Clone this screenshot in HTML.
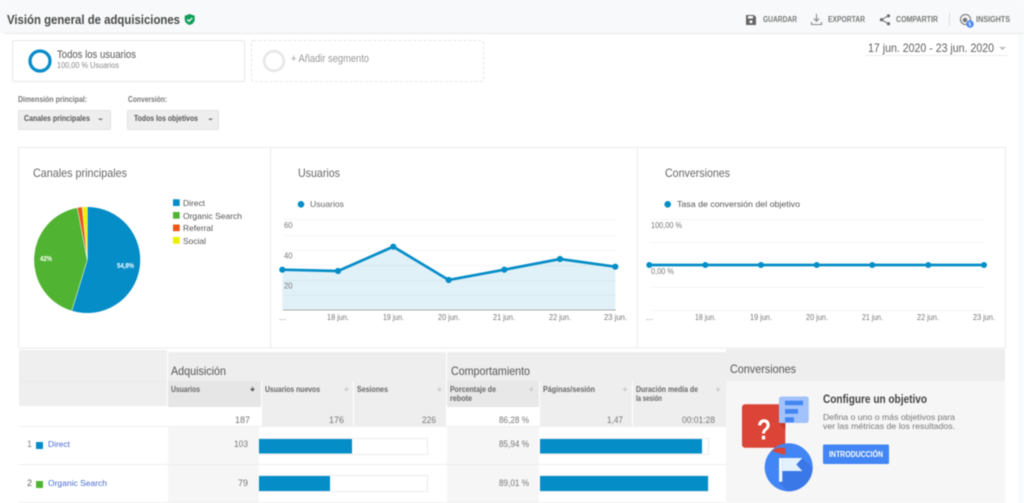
<!DOCTYPE html>
<html lang="es">
<head>
<meta charset="utf-8">
<title>Visión general de adquisiciones</title>
<style>
html,body{margin:0;padding:0;background:#fff;width:1024px;height:503px;overflow:hidden}
svg{display:block;filter:blur(.45px)}
text{font-family:"Liberation Sans",sans-serif;white-space:pre}
.b{font-weight:bold}
</style>
</head>
<body>
<svg width="1024" height="503" viewBox="0 0 1024 503" xmlns="http://www.w3.org/2000/svg">
<defs><clipPath id="c"><circle cx="788.700" cy="467.300" r="24"/></clipPath></defs>
<rect width="1024" height="503" fill="#fff"/>
<rect x="1018" y="34" width="6" height="469" fill="#f9fafb"/>
<!-- header -->
<rect width="1024" height="33" fill="#f8f9fa"/>
<rect x="4" y="33" width="1020" height="1" fill="#e8e8e8"/>
<text x="7" y="24" class="b" font-size="12.500" fill="#4a4a4a" textLength="173" lengthAdjust="spacingAndGlyphs">Visión general de adquisiciones</text>
<path d="M189.700 14l5 1.800v3.600c0 2.800-2.100 4.800-5 5.600-2.900-.8-5-2.800-5-5.600v-3.600z" fill="#0f9d58"/>
<path d="M187.200 19.400l1.800 1.800 3.300-3.300" fill="none" stroke="#fff" stroke-width="1.300"/>
<path d="M746 15h8l2 2v8h-10z" fill="#666"/><rect x="748" y="16" width="5" height="2.500" fill="#f8f9fa"/><circle cx="751" cy="21.800" r="1.500" fill="#f8f9fa"/>
<text x="763" y="22" class="b" font-size="8" fill="#777" textLength="34" lengthAdjust="spacingAndGlyphs">GUARDAR</text>
<path d="M816.500 14v7M813.800 18.500l2.700 2.700 2.700-2.700M811.500 22v2.500h10V22" fill="none" stroke="#888" stroke-width="1.100"/>
<text x="828" y="22" class="b" font-size="8" fill="#777" textLength="37" lengthAdjust="spacingAndGlyphs">EXPORTAR</text>
<path d="M888 16l-6.500 3.700 6.500 3.800" fill="none" stroke="#666" stroke-width="1"/><circle cx="888.500" cy="15.800" r="1.600" fill="#666"/><circle cx="881.500" cy="19.700" r="1.600" fill="#666"/><circle cx="888.500" cy="23.700" r="1.600" fill="#666"/>
<text x="896" y="22" class="b" font-size="8" fill="#777" textLength="42" lengthAdjust="spacingAndGlyphs">COMPARTIR</text>
<rect x="949" y="13" width="1" height="13" fill="#ddd"/>
<circle cx="965.500" cy="19.500" r="5" fill="none" stroke="#888" stroke-width="1.300"/><circle cx="965" cy="20" r="2.300" fill="#777"/>
<circle cx="970" cy="24" r="3.700" fill="#4285f4"/><text x="968.500" y="26" class="b" font-size="5" fill="#fff">5</text>
<text x="976" y="22" class="b" font-size="8" fill="#777" textLength="34" lengthAdjust="spacingAndGlyphs">INSIGHTS</text>
<!-- segments -->
<rect x="12.500" y="40.500" width="232" height="41" rx="2" fill="#fff" stroke="#e6e6e6"/>
<circle cx="40" cy="61" r="10" fill="none" stroke="#0a8cc9" stroke-width="3.300"/>
<text x="57" y="58" font-size="11" fill="#555" textLength="79" lengthAdjust="spacingAndGlyphs">Todos los usuarios</text>
<text x="57" y="68" font-size="8.500" fill="#888" textLength="62" lengthAdjust="spacingAndGlyphs">100,00 % Usuarios</text>
<rect x="251.500" y="40.500" width="232" height="41" rx="2" fill="#fff" stroke="#e6e6e6" stroke-dasharray="3 2"/>
<circle cx="274" cy="61" r="9.800" fill="none" stroke="#e8e8e8" stroke-width="2.800"/>
<text x="291" y="62" font-size="11" fill="#999" textLength="78" lengthAdjust="spacingAndGlyphs">+ Añadir segmento</text>
<!-- date -->
<text x="868" y="52" font-size="12" fill="#5f5f5f" textLength="126" lengthAdjust="spacingAndGlyphs">17 jun. 2020 - 23 jun. 2020</text>
<path d="M999 47h7l-3.500 3z" fill="#bbb"/>
<rect x="865" y="55" width="143" height="1" fill="#ececec"/>
<!-- dropdowns -->
<text x="18" y="102" class="b" font-size="8" fill="#777" textLength="69" lengthAdjust="spacingAndGlyphs">Dimensión principal:</text>
<text x="128" y="102" class="b" font-size="8" fill="#777" textLength="39" lengthAdjust="spacingAndGlyphs">Conversión:</text>
<rect x="18.500" y="110.500" width="92" height="19" rx="1" fill="#eee" stroke="#e2e2e2"/>
<text x="24" y="121" class="b" font-size="8.500" fill="#555" textLength="66" lengthAdjust="spacingAndGlyphs">Canales principales</text>
<path d="M98 118.500h5l-2.500 2z" fill="#777"/>
<rect x="127.500" y="110.500" width="91" height="19" rx="1" fill="#eee" stroke="#e2e2e2"/>
<text x="134" y="121" class="b" font-size="8.500" fill="#555" textLength="64" lengthAdjust="spacingAndGlyphs">Todos los objetivos</text>
<path d="M208 118.500h5l-2.500 2z" fill="#777"/>
<!-- charts panel -->
<rect x="18.500" y="147.500" width="987" height="200.500" fill="#fff" stroke="#ededed"/>
<rect x="270" y="148" width="1" height="200" fill="#ededed"/>
<rect x="637" y="148" width="1" height="200" fill="#ededed"/>
<text x="33" y="177" font-size="12" fill="#666" textLength="94" lengthAdjust="spacingAndGlyphs">Canales principales</text>
<text x="298" y="177" font-size="12" fill="#666" textLength="42" lengthAdjust="spacingAndGlyphs">Usuarios</text>
<text x="665" y="177" font-size="12" fill="#666" textLength="65" lengthAdjust="spacingAndGlyphs">Conversiones</text>
<!-- pie -->
<g stroke="#fff" stroke-width=".5">
<path d="M87.300 260L87.300 206.700A53.300 53.300 0 1 1 71.700 311Z" fill="#058dc7"/>
<path d="M87.300 260L71.700 311A53.300 53.300 0 0 1 77.300 207.600Z" fill="#50b432"/>
<path d="M87.300 260L77.300 207.600A53.300 53.300 0 0 1 82.300 206.900Z" fill="#ed561b"/>
<path d="M87.300 260L82.300 206.900A53.300 53.300 0 0 1 87.300 206.700Z" fill="#edef00"/>
</g>
<text x="117" y="268" class="b" font-size="7" fill="#fff" textLength="17" lengthAdjust="spacingAndGlyphs">54,8%</text>
<text x="40" y="261" class="b" font-size="7" fill="#fff" textLength="12" lengthAdjust="spacingAndGlyphs">42%</text>
<rect x="173" y="199.300" width="6.700" height="6.700" fill="#058dc7"/>
<rect x="173" y="212" width="6.700" height="6.700" fill="#50b432"/>
<rect x="173" y="224.500" width="6.700" height="6.700" fill="#ed561b"/>
<rect x="173" y="237" width="6.700" height="6.700" fill="#edef00"/>
<g font-size="8.500" fill="#555">
<text x="183" y="206" textLength="22" lengthAdjust="spacingAndGlyphs">Direct</text>
<text x="183" y="219" textLength="59" lengthAdjust="spacingAndGlyphs">Organic Search</text>
<text x="183" y="231" textLength="30" lengthAdjust="spacingAndGlyphs">Referral</text>
<text x="183" y="244" textLength="23" lengthAdjust="spacingAndGlyphs">Social</text>
</g>
<!-- users chart -->
<circle cx="301" cy="204.300" r="3.300" fill="#058dc7"/>
<text x="310" y="207" font-size="8.500" fill="#666" textLength="34" lengthAdjust="spacingAndGlyphs">Usuarios</text>
<g fill="#f6f6f6">
<rect x="283" y="219" width="333" height="1"/><rect x="283" y="235" width="333" height="1"/><rect x="283" y="250" width="333" height="1"/><rect x="283" y="265" width="333" height="1"/><rect x="283" y="280" width="333" height="1"/><rect x="283" y="295" width="333" height="1"/>
</g>
<path d="M282.300 269.700L338 271L393.300 246.700L448.700 280L504.300 269.700L560 259L615.300 266.700V310H282.300Z" fill="#058dc7" fill-opacity=".12"/>
<rect x="283" y="309.500" width="333" height="1" fill="#aaa"/>
<path d="M282.300 269.700L338 271L393.300 246.700L448.700 280L504.300 269.700L560 259L615.300 266.700" fill="none" stroke="#058dc7" stroke-width="2.700"/>
<g fill="#058dc7"><circle cx="282.300" cy="269.700" r="3.100"/><circle cx="338" cy="271" r="3.100"/><circle cx="393.300" cy="246.700" r="3.100"/><circle cx="448.700" cy="280" r="3.100"/><circle cx="504.300" cy="269.700" r="3.100"/><circle cx="560" cy="259" r="3.100"/><circle cx="615.300" cy="266.700" r="3.100"/></g>
<g font-size="8.500" fill="#777">
<text x="284" y="228" textLength="8.500" lengthAdjust="spacingAndGlyphs">60</text>
<text x="284" y="258.500" textLength="8.500" lengthAdjust="spacingAndGlyphs">40</text>
<text x="284" y="288.500" textLength="8.500" lengthAdjust="spacingAndGlyphs">20</text>
<text x="279" y="320">...</text>
<text x="327" y="320" textLength="22" lengthAdjust="spacingAndGlyphs">18 jun.</text>
<text x="383" y="320" textLength="21" lengthAdjust="spacingAndGlyphs">19 jun.</text>
<text x="438" y="320" textLength="22" lengthAdjust="spacingAndGlyphs">20 jun.</text>
<text x="493" y="320" textLength="22" lengthAdjust="spacingAndGlyphs">21 jun.</text>
<text x="549" y="320" textLength="22" lengthAdjust="spacingAndGlyphs">22 jun.</text>
<text x="604" y="320" textLength="23" lengthAdjust="spacingAndGlyphs">23 jun.</text>
</g>
<!-- conversions chart -->
<circle cx="667.700" cy="204.300" r="3.300" fill="#058dc7"/>
<text x="677" y="207" font-size="8.500" fill="#555" textLength="123" lengthAdjust="spacingAndGlyphs">Tasa de conversión del objetivo</text>
<g fill="#f5f5f5">
<rect x="650" y="219" width="335" height="1"/><rect x="650" y="242" width="335" height="1"/><rect x="650" y="287" width="335" height="1"/><rect x="650" y="310" width="335" height="1"/>
</g>
<path d="M649.300 265H984" stroke="#058dc7" stroke-width="2.700" fill="none"/>
<g fill="#058dc7"><circle cx="649.300" cy="265" r="3"/><circle cx="705.300" cy="265" r="3"/><circle cx="761" cy="265" r="3"/><circle cx="816.700" cy="265" r="3"/><circle cx="872.300" cy="265" r="3"/><circle cx="928.300" cy="265" r="3"/><circle cx="984" cy="265" r="3"/></g>
<g font-size="8.500" fill="#777">
<text x="651" y="228" textLength="31" lengthAdjust="spacingAndGlyphs">100,00 %</text>
<text x="651" y="274" textLength="23" lengthAdjust="spacingAndGlyphs">0,00 %</text>
<text x="646" y="320">...</text>
<text x="695" y="320" textLength="21" lengthAdjust="spacingAndGlyphs">18 jun.</text>
<text x="750" y="320" textLength="22" lengthAdjust="spacingAndGlyphs">19 jun.</text>
<text x="806" y="320" textLength="22" lengthAdjust="spacingAndGlyphs">20 jun.</text>
<text x="862" y="320" textLength="21" lengthAdjust="spacingAndGlyphs">21 jun.</text>
<text x="917" y="320" textLength="22" lengthAdjust="spacingAndGlyphs">22 jun.</text>
<text x="973" y="320" textLength="22" lengthAdjust="spacingAndGlyphs">23 jun.</text>
</g>
<!-- table -->
<rect x="19" y="350" width="148" height="56" fill="#efefef"/>
<rect x="19" y="381" width="148" height="1" fill="#ebebeb"/>
<rect x="168" y="352" width="278" height="29" fill="#eee"/>
<rect x="447" y="352" width="279" height="29" fill="#eee"/>
<text x="171" y="375" font-size="12" fill="#555" textLength="55" lengthAdjust="spacingAndGlyphs">Adquisición</text>
<text x="451" y="375" font-size="12" fill="#555" textLength="79" lengthAdjust="spacingAndGlyphs">Comportamiento</text>
<rect x="168" y="381" width="93" height="26" fill="#e6e6e6"/>
<rect x="262" y="381" width="91" height="45" fill="#eee"/>
<rect x="354" y="381" width="92" height="45" fill="#eee"/>
<rect x="447" y="381" width="92" height="26" fill="#e8e8e8"/>
<rect x="540" y="381" width="92" height="45" fill="#eee"/>
<rect x="633" y="381" width="93" height="45" fill="#eee"/>
<g class="b" font-size="8" fill="#666" font-weight="bold">
<text x="171" y="392" textLength="29" lengthAdjust="spacingAndGlyphs">Usuarios</text>
<text x="265" y="392" textLength="55" lengthAdjust="spacingAndGlyphs">Usuarios nuevos</text>
<text x="357" y="392" textLength="31" lengthAdjust="spacingAndGlyphs">Sesiones</text>
<text x="450" y="392" textLength="46" lengthAdjust="spacingAndGlyphs">Porcentaje de</text>
<text x="450" y="401" textLength="22" lengthAdjust="spacingAndGlyphs">rebote</text>
<text x="543" y="392" textLength="52" lengthAdjust="spacingAndGlyphs">Páginas/sesión</text>
<text x="636" y="392" textLength="62" lengthAdjust="spacingAndGlyphs">Duración media de</text>
<text x="636" y="401" textLength="26" lengthAdjust="spacingAndGlyphs">la sesión</text>
</g>
<path d="M252.500 386.500v3.500M250.800 389l1.700 2 1.700-2z" stroke="#555" stroke-width=".8" fill="#555"/>
<g stroke="#ccc" stroke-width=".8" fill="#ccc">
<path d="M346.500 386.500v3.500M344.800 389l1.700 2 1.700-2z"/>
<path d="M439.500 386.500v3.500M437.800 389l1.700 2 1.700-2z"/>
<path d="M531.500 386.500v3.500M529.800 389l1.700 2 1.700-2z"/>
<path d="M625 386.500v3.500M623.300 389l1.700 2 1.700-2z"/>
<path d="M718 386.500v3.500M716.300 389l1.700 2 1.700-2z"/>
</g>
<g font-size="9" fill="#777">
<text x="235" y="423" textLength="15" lengthAdjust="spacingAndGlyphs">187</text>
<text x="329" y="423" textLength="15" lengthAdjust="spacingAndGlyphs">176</text>
<text x="422" y="423" textLength="14" lengthAdjust="spacingAndGlyphs">226</text>
<text x="499" y="423" textLength="30" lengthAdjust="spacingAndGlyphs">86,28 %</text>
<text x="607" y="423" textLength="16" lengthAdjust="spacingAndGlyphs">1,47</text>
<text x="682" y="423" textLength="33" lengthAdjust="spacingAndGlyphs">00:01:28</text>
</g>
<rect x="19" y="426" width="707" height="1" fill="#f0f0f0"/>
<rect x="19" y="464" width="707" height="1" fill="#eee"/>
<rect x="19" y="502" width="707" height="1" fill="#eee"/>
<rect x="168" y="427" width="91" height="37" fill="#f6f6f6"/>
<rect x="168" y="465" width="91" height="37" fill="#f6f6f6"/>
<rect x="447" y="427" width="92" height="37" fill="#f6f6f6"/>
<rect x="447" y="465" width="92" height="37" fill="#f6f6f6"/>
<text x="27" y="447" font-size="9" fill="#888">1</text>
<text x="27" y="486" font-size="9" fill="#666">2</text>
<rect x="36" y="442" width="7" height="7" fill="#058dc7"/>
<rect x="36" y="481" width="7" height="7" fill="#50b432"/>
<text x="48" y="447" font-size="8.500" fill="#4a6bd0" textLength="22" lengthAdjust="spacingAndGlyphs">Direct</text>
<text x="48" y="486" font-size="8.500" fill="#4a6bd0" textLength="59" lengthAdjust="spacingAndGlyphs">Organic Search</text>
<g font-size="9" fill="#777">
<text x="234" y="447" textLength="14" lengthAdjust="spacingAndGlyphs">103</text>
<text x="238" y="486" textLength="10" lengthAdjust="spacingAndGlyphs">79</text>
<text x="499" y="447" textLength="30" lengthAdjust="spacingAndGlyphs">85,94 %</text>
<text x="499" y="486" textLength="30" lengthAdjust="spacingAndGlyphs">89,01 %</text>
</g>
<g fill="#fff" stroke="#ededed">
<rect x="259.500" y="438.500" width="168" height="16"/>
<rect x="259.500" y="475.500" width="168" height="16"/>
<rect x="540.500" y="438.500" width="168" height="16"/>
<rect x="540.500" y="475.500" width="168" height="16"/>
</g>
<g fill="#058dc7">
<rect x="259" y="439" width="93" height="14.500"/>
<rect x="259" y="476" width="71" height="15"/>
<rect x="540" y="439" width="162" height="14.500"/>
<rect x="540" y="476" width="168" height="15"/>
</g>
<!-- goals -->
<rect x="726" y="349" width="279" height="32" fill="#eee"/>
<rect x="726" y="381" width="279" height="122" fill="#f6f6f6"/>
<text x="730" y="373" font-size="12" fill="#555" textLength="66" lengthAdjust="spacingAndGlyphs">Conversiones</text>
<path d="M745 404.300h40.300V455l-8-7.300H745a3 3 0 0 1-3-3v-37.400a3 3 0 0 1 3-3z" fill="#db4437"/>
<path d="M779 399a2.500 2.500 0 0 1 2.500-2.500h24.700a2.500 2.500 0 0 1 2.500 2.500v21.500a2.500 2.500 0 0 1-2.500 2.500H779z" fill="#a1c2fa"/>
<path d="M779 423h6.300V430z" fill="#c23b2e"/>
<rect x="785" y="400.700" width="18" height="4.500" fill="#4285f4"/>
<rect x="785" y="409" width="13" height="4.700" fill="#4285f4"/>
<rect x="785" y="417.300" width="9" height="5" fill="#4285f4"/>
<text x="757" y="439.500" class="b" font-size="29" fill="#fff" textLength="14" lengthAdjust="spacingAndGlyphs">?</text>
<circle cx="788.700" cy="467.300" r="24" fill="#4285f4"/>
<g clip-path="url(#c)"><path d="M779 481.700L782.300 471h20l-6-6.500 6-6.500L815 470v25h-25z" fill="#3b78e7"/></g>
<path d="M771.500 451l6 -3.300h7.800V455z" fill="#db4437"/>
<rect x="779" y="458" width="3.300" height="23.700" fill="#f1f7fe"/>
<path d="M782.300 458h20l-6 6.500 6 6.500h-20z" fill="#e3f0fd"/>
<text x="823" y="403" class="b" font-size="11.500" fill="#444" textLength="104" lengthAdjust="spacingAndGlyphs">Configure un objetivo</text>
<text x="823" y="420" font-size="8.500" fill="#777" textLength="132" lengthAdjust="spacingAndGlyphs">Defina o uno o más objetivos para</text>
<text x="823" y="429" font-size="8.500" fill="#777" textLength="132" lengthAdjust="spacingAndGlyphs">ver las métricas de los resultados.</text>
<rect x="823" y="444.500" width="66" height="19.500" rx="1.500" fill="#4285f4"/>
<text x="829" y="457" class="b" font-size="8" fill="#fff" textLength="54" lengthAdjust="spacingAndGlyphs">INTRODUCCIÓN</text>
</svg>
</body>
</html>
